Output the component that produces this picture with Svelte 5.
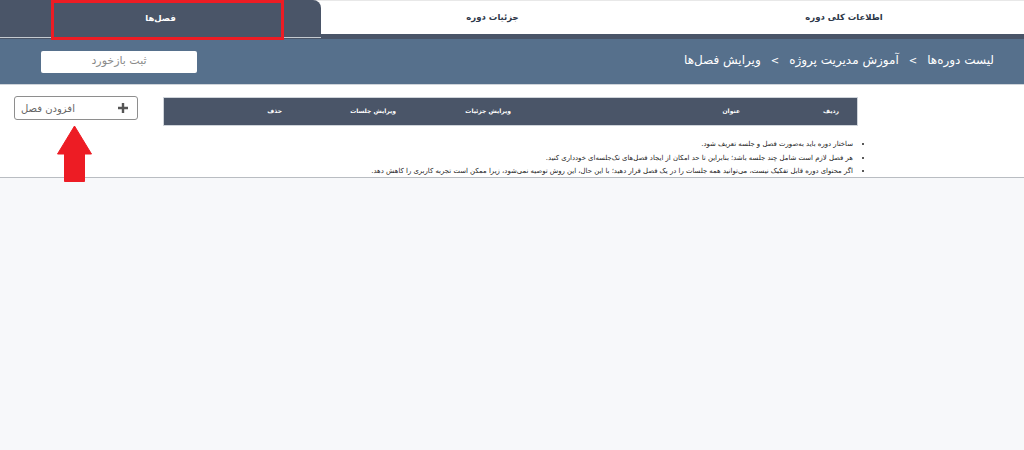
<script lang="ts">
	const tabs = [
		{ label: 'اطلاعات کلی دوره', cls: 'tab-info' },
		{ label: 'جزئیات دوره', cls: 'tab-details' },
		{ label: 'فصل‌ها', cls: 'tab-chapters active' }
	];
	const crumbs = ['لیست دوره‌ها', 'آموزش مدیریت پروژه', 'ویرایش فصل‌ها'];
	const columns = [
		{ label: 'ردیف', width: 99 },
		{ label: 'عنوان', width: 229 },
		{ label: 'ویرایش جزئیات', width: 115 },
		{ label: 'ویرایش جلسات', width: 114 },
		{ label: 'حذف', width: 136 }
	];
	const notes = [
		'ساختار دوره باید به‌صورت فصل و جلسه تعریف شود.',
		'هر فصل لازم است شامل چند جلسه باشد؛ بنابراین تا حد امکان از ایجاد فصل‌های تک‌جلسه‌ای خودداری کنید.',
		'اگر محتوای دوره قابل تفکیک نیست، می‌توانید همه جلسات را در یک فصل قرار دهید؛ با این حال، این روش توصیه نمی‌شود، زیرا ممکن است تجربه کاربری را کاهش دهد.'
	];
</script>

<div class="page" dir="rtl">
	<nav class="tabs">
		{#each tabs as tab}
			<button class={'tab ' + tab.cls}>{tab.label}</button>
		{/each}
	</nav>

	<header class="bar">
		<div class="crumbs">
			{#each crumbs as crumb, i}
				{#if i > 0}<span class="sep">&gt;</span>{/if}
				<span>{crumb}</span>
			{/each}
		</div>
		<button class="feedback">ثبت بازخورد</button>
	</header>

	<section class="content">
		<div class="top">
			<div class="table-head">
				{#each columns as col}
					<span style="width: {col.width}px">{col.label}</span>
				{/each}
			</div>
			<button class="add">
				<svg width="10" height="10" viewBox="0 0 10 10" aria-hidden="true">
					<path d="M3.8 0h2.4v3.8H10v2.4H6.2V10H3.8V6.2H0V3.8h3.8z" fill="#555"></path>
				</svg>
				<span>افزودن فصل</span>
			</button>
		</div>
		<ul class="notes">
			{#each notes as note}
				<li>{note}</li>
			{/each}
		</ul>
	</section>

	<!-- red annotations drawn on top of the screenshot -->
	<div class="mark"></div>
	<svg class="arrow" width="35" height="58" viewBox="0 0 35 58" aria-hidden="true">
		<path
			d="M17.5 1 34.5 29H27.5V56.5H7.5V29H.5z"
			fill="#ed1c24"
			stroke="#ed1c24"
			stroke-linejoin="round"
		></path>
	</svg>
</div>

<style>
	:global(body) {
		margin: 0;
		background: #f7f8fa;
	}

	.page {
		position: relative;
		min-height: 450px;
		overflow: hidden;
		font-family: 'DejaVu Sans', 'Liberation Sans', sans-serif;
		color: #333;
	}

	.tabs {
		display: flex;
		height: 34px;
		background: #fff;
		border-top: 1px solid #e8e8e8;
		box-sizing: border-box;
	}

	.tab {
		border: none;
		background: none;
		font-family: inherit;
		font-size: 8.5px;
		font-weight: 700;
		color: #2d3748;
		padding: 0 0 2px;
	}

	.tab-info {
		width: 360px;
	}

	.tab-details {
		width: 343px;
	}

	.tab-chapters {
		width: 321px;
	}

	.tab.active {
		height: 38px;
		margin-top: -1px;
		background: #4a5568;
		color: #fff;
		border-radius: 0 8px 0 0;
		border-bottom: 1px solid #c5cad0;
		position: relative;
		z-index: 1;
	}

	.bar {
		display: flex;
		align-items: center;
		justify-content: space-between;
		height: 45px;
		padding: 0 30px 0 41px;
		background: #56708c;
		border-top: 5px solid #4a5568;
		border-bottom: 1px solid #cfd4da;
	}

	.crumbs {
		display: flex;
		gap: 10px;
		align-items: center;
		margin-bottom: 3px;
		color: #fff;
		font-size: 12px;
	}

	.sep {
		font-size: 10px;
	}

	.feedback {
		width: 156px;
		height: 22px;
		padding: 0 0 2px;
		border: none;
		border-radius: 2px;
		background: #fff;
		color: #8a8a8a;
		font-family: inherit;
		font-size: 11px;
	}

	.content {
		background: #fff;
		border-bottom: 1px solid #b9bdc2;
		height: 92px;
	}

	.top {
		display: flex;
		align-items: flex-start;
		justify-content: space-between;
		padding: 11px 166px 0 14px;
	}

	.table-head {
		display: flex;
		align-items: center;
		width: 695px;
		height: 29px;
		margin-top: 1px;
		padding-bottom: 2px;
		background: #4a5568;
		border: 1px solid #cfd4da;
		box-sizing: border-box;
		color: #fff;
		font-size: 6px;
		font-weight: 700;
	}

	.table-head span {
		flex: none;
		box-sizing: border-box;
		padding-right: 18px;
	}

	.add {
		display: flex;
		align-items: center;
		justify-content: space-between;
		width: 124px;
		height: 24px;
		padding: 0 9px 0 6px;
		box-sizing: border-box;
		background: #fff;
		border: 1px solid #8e8e8e;
		border-radius: 3px;
		color: #666;
		font-family: inherit;
		font-size: 10px;
	}

	.notes {
		margin: 12px 0 0;
		padding: 0 171px 0 0;
		list-style: disc;
		font-size: 6.9px;
		line-height: 13.5px;
		color: #222;
	}

	.notes li {
		white-space: nowrap;
	}

	.mark {
		position: absolute;
		z-index: 2;
		left: 51px;
		top: 0;
		width: 233px;
		height: 40px;
		box-sizing: border-box;
		border: 3px solid #ed1c24;
	}

	.arrow {
		position: absolute;
		z-index: 2;
		left: 57px;
		top: 125px;
	}
</style>
